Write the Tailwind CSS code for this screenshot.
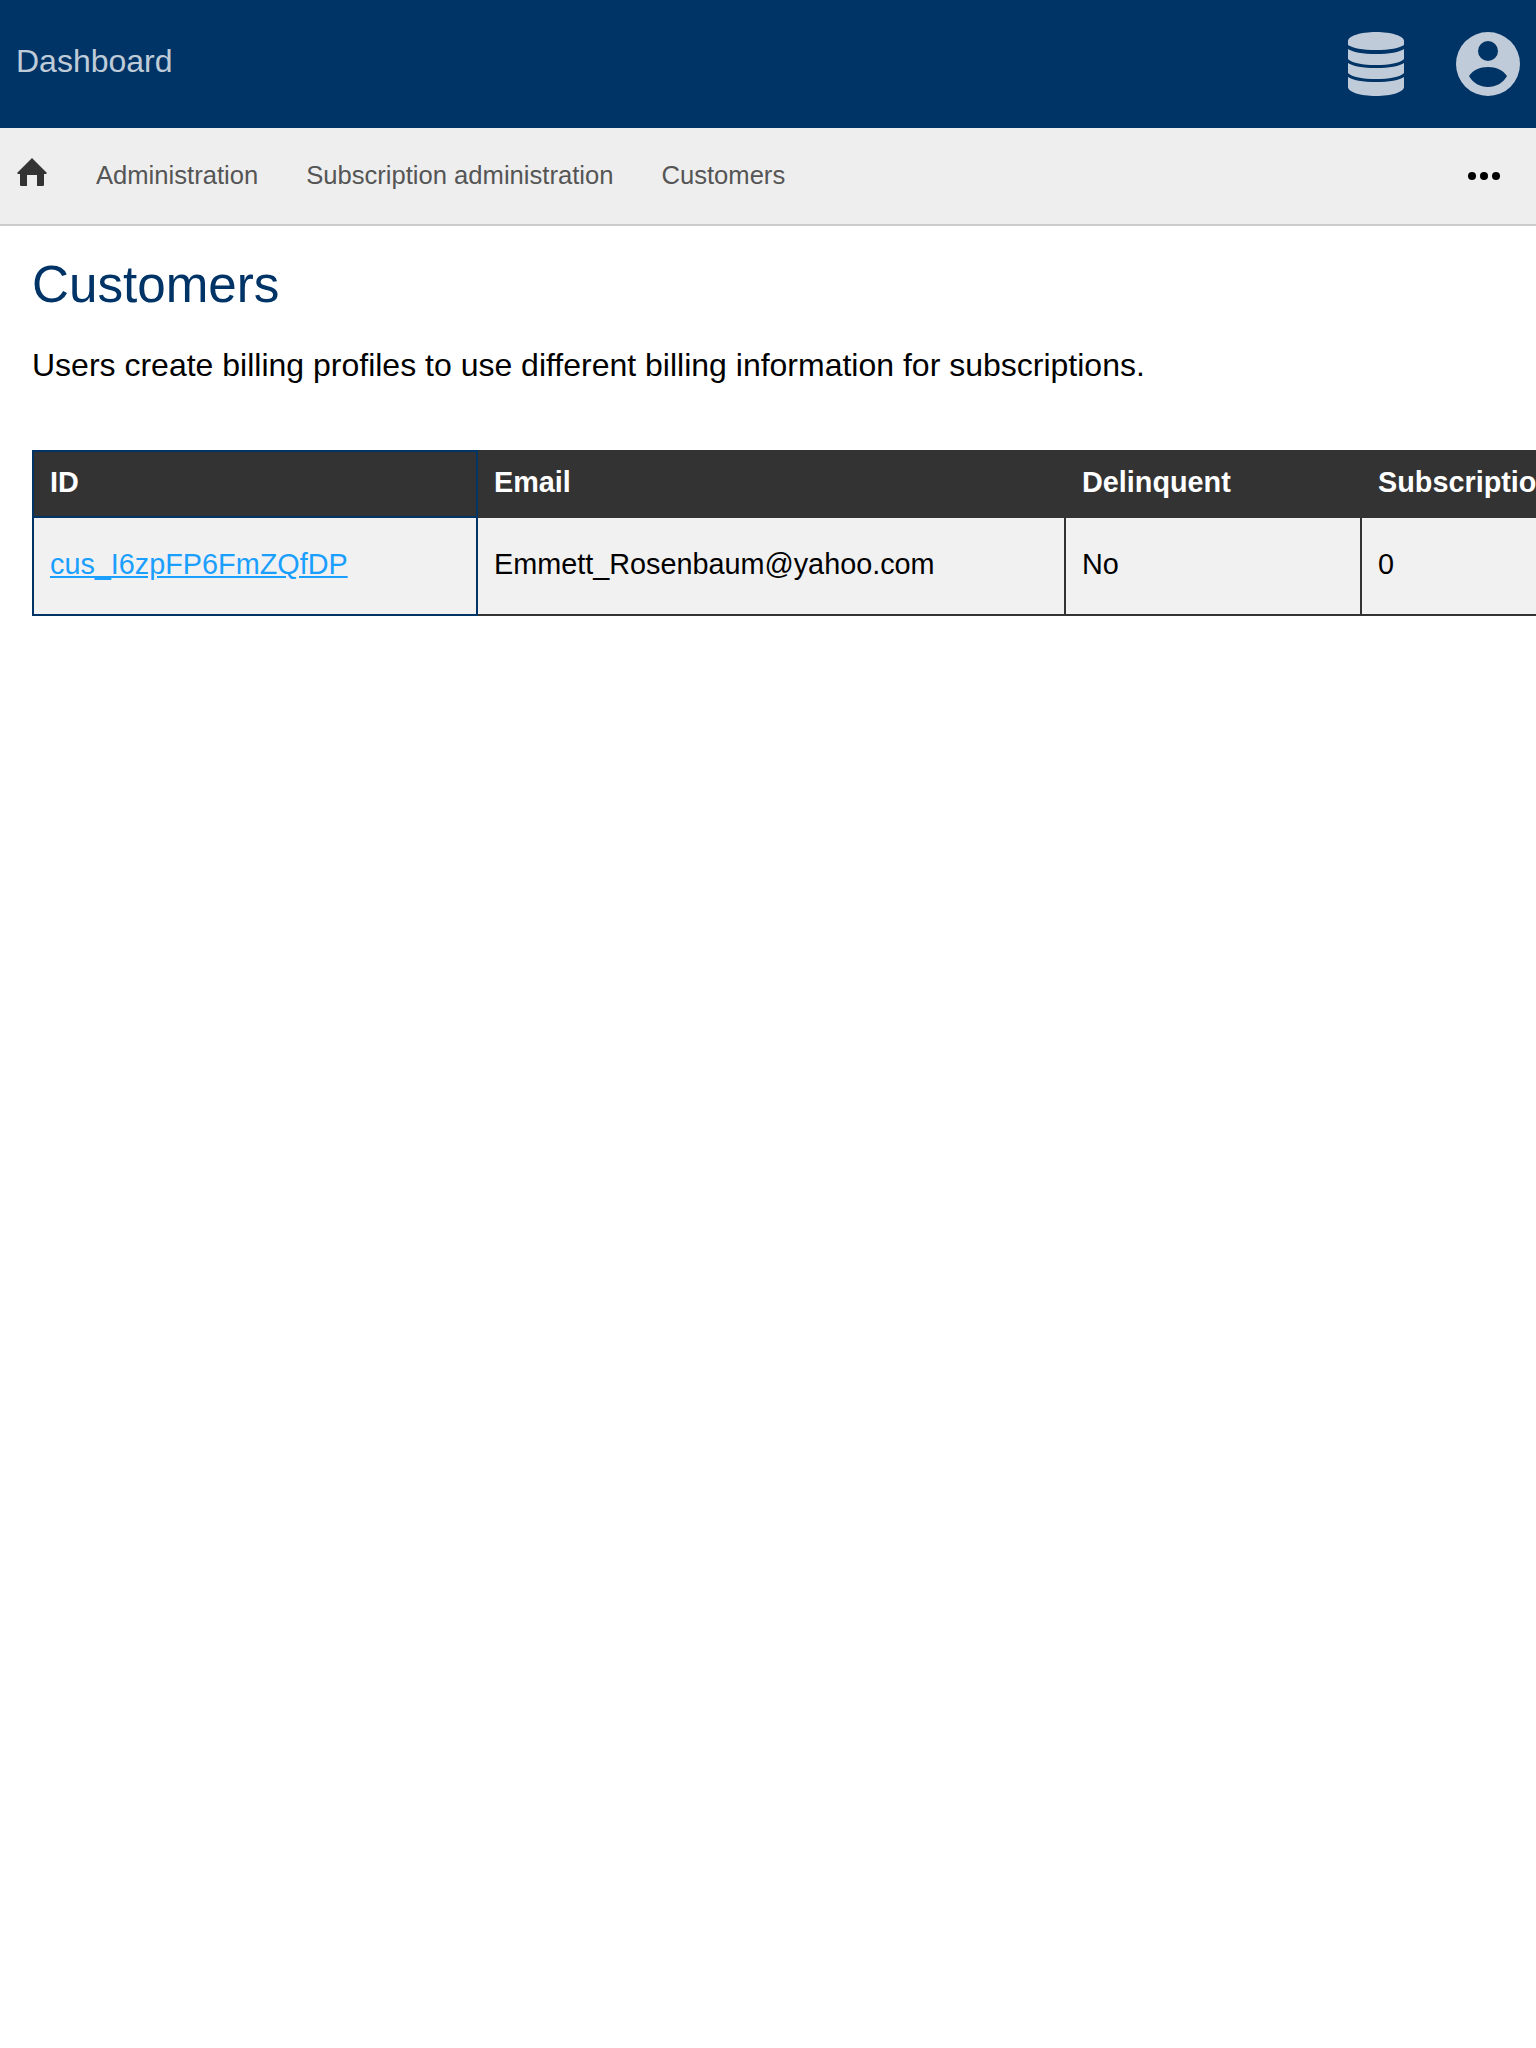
<!DOCTYPE html>
<html lang="en">
<head>
<meta charset="utf-8">
<title>Customers</title>
<script src="https://cdn.jsdelivr.net/npm/@tailwindcss/browser@4"></script>
</head>
<body class="bg-white overflow-x-hidden font-['Liberation_Sans',Arial,sans-serif]">
<div class="w-[1536px] h-[2048px] overflow-hidden">
  <header class="h-[128px] bg-[#003366] flex items-center pl-4 pr-4">
    <span class="text-[32px] text-white/75 leading-none -mt-[6px]">Dashboard</span>
    <div class="ml-auto flex items-center gap-[52px]">
      <svg class="w-[56px] h-[64px] text-white/75" viewBox="0 0 56 64" fill="currentColor" aria-hidden="true">
        <path d="M0 9C0 4 12.500 0 28 0S56 4 56 9V13C52 16 41 18 28 18S4 16 0 13z"/>
        <path d="M0 17C4 20 15 22 28 22S52 20 56 17V27C52 31 41 33 28 33S4 31 0 27z"/>
        <path d="M0 31C4 34 15 36 28 36S52 34 56 31V41C52 45 41 47 28 47S4 45 0 41z"/>
        <path d="M0 45C4 48 15 50 28 50S52 48 56 45V55C56 60 43.500 64 28 64S0 60 0 55z"/>
      </svg>
      <svg class="w-[64px] h-[64px] text-white/75" viewBox="0 0 64 64" aria-hidden="true">
        <path fill="currentColor" fill-rule="evenodd" d="M32 0a32 32 0 1 1 0 64a32 32 0 1 1 0-64zM32 9a10 10 0 1 0 0 20a10 10 0 1 0 0-20zM13 44c4 7 11 11 19 11s15-4 19-11c-4-6-11-9-19-9s-15 3-19 9z"/>
      </svg>
    </div>
  </header>
  <nav class="h-[98px] bg-[#eeeeee] border-b-2 border-[#cccccc] flex items-center pl-4 pr-[36px]">
    <svg class="w-[32px] h-[28px] text-[#333333] -mt-[8px]" viewBox="0 0 32 28" fill="currentColor" aria-hidden="true">
      <path d="M16 0L31 15L30 16H28V27a1 1 0 0 1-1 1H21V17H11V28H5a1 1 0 0 1-1-1V16H2L1 15z"/>
    </svg>
    <div class="flex items-center gap-12 ml-12 text-[25.6px] text-[#555555] leading-none">
      <span>Administration</span>
      <span>Subscription administration</span>
      <span>Customers</span>
    </div>
    <svg class="ml-auto w-[32px] h-[8px] text-black" viewBox="0 0 32 8" fill="currentColor" aria-hidden="true">
      <circle cx="4" cy="4" r="4"/><circle cx="16" cy="4" r="4"/><circle cx="28" cy="4" r="4"/>
    </svg>
  </nav>
  <main class="pl-8">
    <h1 class="text-[51.2px] leading-none text-[#003366] font-normal mt-[33px]">Customers</h1>
    <p class="text-[32px] leading-none text-black mt-[39px]">Users create billing profiles to use different billing information for subscriptions.</p>
    <table class="mt-[69px] table-fixed border-collapse w-[1800px] text-[28.8px] text-black">
      <colgroup>
        <col class="w-[444px]"><col class="w-[588px]"><col class="w-[296px]"><col class="w-[472px]">
      </colgroup>
      <thead>
        <tr class="h-[66px] bg-[#333333] text-white text-left">
          <th class="font-bold px-4 pb-[3px] border-2 border-[#003366]">ID</th>
          <th class="font-bold px-4 pb-[3px] border-2 border-[#333333]">Email</th>
          <th class="font-bold px-4 pb-[3px] border-2 border-[#333333]">Delinquent</th>
          <th class="font-bold px-4 pb-[3px] border-2 border-[#333333]">Subscriptions</th>
        </tr>
      </thead>
      <tbody>
        <tr class="h-[98px] bg-[#f1f1f1]">
          <td class="px-4 pb-[3px] border-2 border-[#003366]"><a href="#" class="text-[#1a9fff] underline">cus_I6zpFP6FmZQfDP</a></td>
          <td class="px-4 pb-[3px] border-2 border-[#333333]">Emmett_Rosenbaum@yahoo.com</td>
          <td class="px-4 pb-[3px] border-2 border-[#333333]">No</td>
          <td class="px-4 pb-[3px] border-2 border-[#333333]">0</td>
        </tr>
      </tbody>
    </table>
  </main>
</div>
</body>
</html>
